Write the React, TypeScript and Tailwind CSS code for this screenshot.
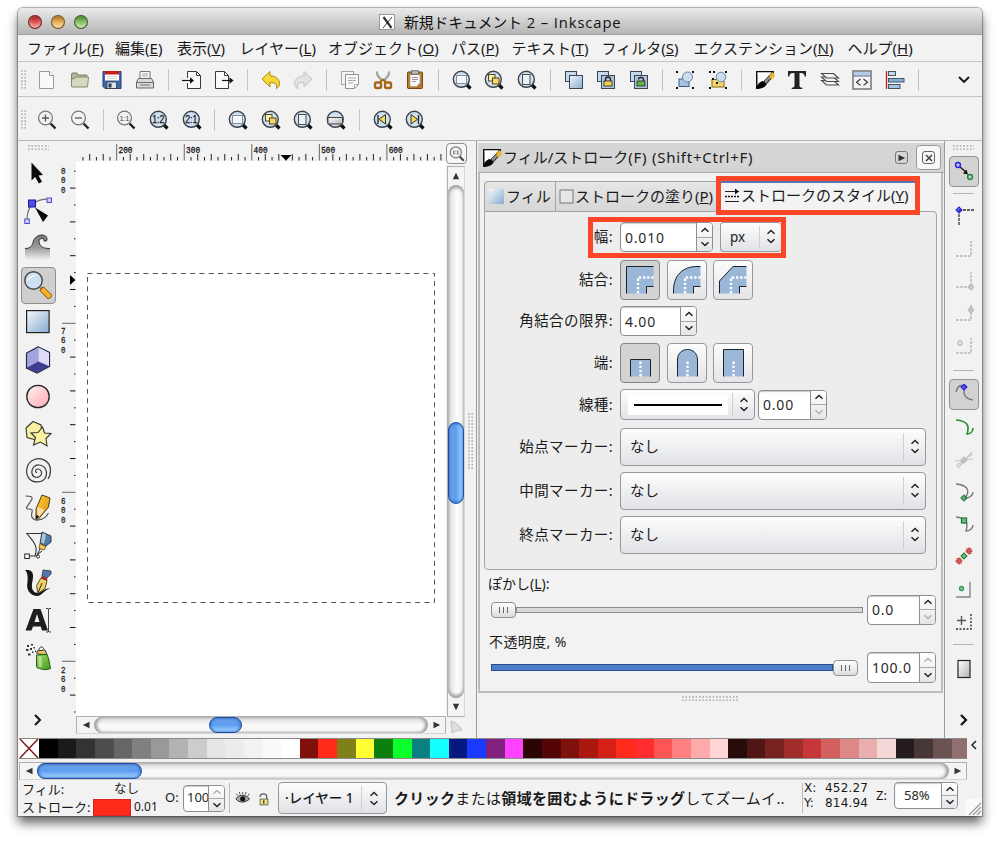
import React from "react";

type Kids = { children?: React.ReactNode };

function Ico({ s = 20, children }: Kids & { s?: number }) {
  return (
    <svg width={s} height={s} viewBox={`0 0 ${s} ${s}`} fill="none" className="shrink-0">
      {children}
    </svg>
  );
}

function Defs() {
  return (
    <svg width="0" height="0" className="absolute">
      <defs>
        <linearGradient id="blue" x1="0" y1="0" x2="1" y2="1">
          <stop offset="0" stopColor="#f4f8fc" />
          <stop offset="1" stopColor="#88abd0" />
        </linearGradient>
        <linearGradient id="pink" x1="0" y1="0" x2="1" y2="1">
          <stop offset="0" stopColor="#fff2f3" />
          <stop offset="1" stopColor="#ffa8b0" />
        </linearGradient>
        <linearGradient id="gray" x1="0" y1="0" x2="1" y2="1">
          <stop offset="0" stopColor="#ffffff" />
          <stop offset="1" stopColor="#b4b4b4" />
        </linearGradient>
        <linearGradient id="steel" x1="0" y1="0" x2="0" y2="1">
          <stop offset="0" stopColor="#777777" />
          <stop offset="0.5" stopColor="#999999" />
          <stop offset="1" stopColor="#eeeeee" />
        </linearGradient>
        <linearGradient id="gold" x1="0" y1="0" x2="1" y2="1">
          <stop offset="0" stopColor="#ffd23a" />
          <stop offset="1" stopColor="#e08a10" />
        </linearGradient>
        <linearGradient id="green" x1="0" y1="0" x2="1" y2="1">
          <stop offset="0" stopColor="#a6dc6c" />
          <stop offset="1" stopColor="#3f9a1c" />
        </linearGradient>
      </defs>
    </svg>
  );
}

/* ---------- toolbar icons ---------- */

const Lens = ({ children }: Kids) => (
  <Ico>
    <path d="M14.5 14.5l4 4" stroke="#111" strokeWidth="3.2" />
    <circle cx="9.3" cy="9.3" r="8" fill="#cfe0f2" stroke="#3a4248" strokeWidth="1.4" />
    {children}
  </Ico>
);
const GrayLens = ({ children }: Kids) => (
  <Ico>
    <path d="M13.5 13.5l5 5" stroke="#222" strokeWidth="2.4" />
    <circle cx="8.5" cy="8" r="6.9" fill="#f1f3f1" stroke="#777b77" strokeWidth="1.3" />
    {children}
  </Ico>
);
const LensText = ({ t }: { t: string }) => (
  <text x="9.3" y="13" fontSize="10" fill="#161616" stroke="#161616" strokeWidth=".25" textAnchor="middle" textLength="12" lengthAdjust="spacingAndGlyphs" fontFamily="Liberation Sans, sans-serif">{t}</text>
);
const LensSel = () => <Lens><rect x="4.500" y="5.500" width="10" height="8" fill="#f4f8fc" stroke="#333" strokeDasharray="1 1" /></Lens>;
const LensDraw = () => (
  <Lens>
    <rect x="4.500" y="4.500" width="6.500" height="6.500" fill="#f8edb2" stroke="#55471a" />
    <rect x="8.500" y="8" width="6.500" height="6" fill="#f5d968" stroke="#55471a" />
  </Lens>
);
const LensPage = () => <Lens><rect x="5.500" y="4.500" width="7.500" height="10" fill="#eceeef" stroke="#4c4c4c" /></Lens>;
const Doc = () => (
  <Ico>
    <path d="M2.500 1.500h10l4 4v13h-14z" fill="#fafafa" stroke="#9a9d97" />
    <path d="M12.500 1.500v4h4" fill="#fff" stroke="#9a9d97" />
  </Ico>
);
const Folder = () => (
  <Ico>
    <path d="M1.500 4.500l.5-1.500h5l1 2h9v4H1.500z" fill="#b4b89a" stroke="#7d826a" />
    <path d="M1.500 16.500V9l3-.500 1-1.500h13l-1 10H2z" fill="#d4d9bd" stroke="#858a70" />
  </Ico>
);
const Save = () => (
  <Ico>
    <path d="M1 1.500h18v17H3l-2-2z" fill="#3a69ad" stroke="#1f3f75" />
    <rect x="3" y="1" width="14" height="9.500" fill="#fff" />
    <rect x="3" y="1" width="14" height="3.500" fill="#cc1b16" />
    <path d="M5 6.500h10M5 8.500h10" stroke="#b9c0c8" strokeWidth=".7" />
    <rect x="5" y="12" width="9.500" height="6.500" fill="#dfe3e8" stroke="#333" strokeWidth=".8" />
    <rect x="6.500" y="13.500" width="3" height="4" fill="#26374e" />
  </Ico>
);
const Printer = () => (
  <Ico>
    <path d="M5 9.500V1.500h10v8" fill="#f7f7f7" stroke="#777" />
    <path d="M7 4h6M7 6h6" stroke="#999" strokeWidth=".8" />
    <path d="M1.500 12l2-3.500h13l2 3.500v6h-17z" fill="#d8dad6" stroke="#666" />
    <path d="M2 12.500h16M5 15h10" stroke="#6d706b" />
  </Ico>
);
const Import = () => (
  <Ico>
    <path d="M5.500 8V1.500h9l4 4v13h-13V13" fill="#fafafa" stroke="#3a3a3a" />
    <path d="M14.500 1.500v4h4" stroke="#3a3a3a" />
    <path d="M0 10.500h9" stroke="#111" strokeWidth="1.200" />
    <path d="M8 7.300l4 3.200-4 3.200z" fill="#111" />
  </Ico>
);
const Export = () => (
  <Ico>
    <path d="M1.500 1.500h9l4 4v13h-13z" fill="#fafafa" stroke="#3a3a3a" />
    <path d="M10.500 1.500v4h4" stroke="#3a3a3a" />
    <path d="M8 10.500h8" stroke="#111" strokeWidth="1.200" />
    <path d="M15.500 7.300l4 3.200-4 3.200z" fill="#111" />
  </Ico>
);
const Undo = () => (
  <Ico><path d="M1 9l8-7.500v4.300c6.500.2 9.500 4 9.500 7.500 0 2.600-1 4-3.200 5.400 1.400-4-.6-6.200-6.300-6.200V17z" fill="#f6d83a" stroke="#b18a0c" /></Ico>
);
const Redo = () => (
  <Ico><path d="M19 9l-8-7.500v4.300c-6.500.2-9.500 4-9.500 7.500 0 2.600 1 4 3.200 5.400-1.400-4 .6-6.200 6.300-6.200V17z" fill="#e2e2e2" stroke="#c3c3c3" /></Ico>
);
const Copy = () => (
  <Ico>
    <rect x="1.500" y="1.500" width="12" height="13" fill="#f3f3f3" stroke="#a5a5a5" />
    <path d="M5.500 4.500h13v10l-4 4h-9z" fill="#fafafa" stroke="#909090" />
    <path d="M8 8h8M8 10.500h8M8 13h5M14.500 18.500v-4h4" stroke="#aaa" />
  </Ico>
);
const Cut = () => (
  <Ico>
    <path d="M4 1.500c-1 3 2 6 5.500 9.500M16 1.500c1 3-2 6-5.500 9.500" stroke="#a2a6a2" strokeWidth="2.200" />
    <rect x="2" y="12.500" width="6" height="5.500" rx="1.500" stroke="#a5661a" strokeWidth="2.400" />
    <rect x="12" y="12.500" width="6" height="5.500" rx="1.500" stroke="#a5661a" strokeWidth="2.400" />
    <path d="M7 12l3-2.500 3 2.500" stroke="#a5661a" strokeWidth="2" />
  </Ico>
);
const Paste = () => (
  <Ico>
    <rect x="2.500" y="2" width="15" height="16.500" rx="1" fill="#b87a2a" stroke="#734810" />
    <path d="M5 4.500h10v8.500l-3.500 3.500H5z" fill="#f7f7f7" stroke="#999" strokeWidth=".6" />
    <rect x="6.500" y=".8" width="7" height="3.400" fill="#bbb" stroke="#555" strokeWidth=".8" />
    <path d="M7 7.500h6M7 9.500h6M7 11.500h4" stroke="#999" />
  </Ico>
);
const Stack = ({ mark }: { mark?: "lock" | "unlock" }) => (
  <Ico>
    <rect x="1.500" y="1.500" width="11" height="10" fill="#c8d8ea" stroke="#36475c" />
    <rect x="5.500" y="5.500" width="13" height="13" fill={mark ? "#b3c5da" : "url(#blue)"} stroke="#36475c" />
    {mark && <path d={mark === "lock" ? "M9.500 11V9.500a2.500 2.500 0 015 0V11" : "M9.500 9.500a2.500 2 0 015 0V12"} stroke="#222" strokeWidth="1.300" />}
    {mark && <rect x="8" y="11" width="8" height="5" fill={mark === "lock" ? "#f6d24b" : "#62b544"} stroke="#222" strokeWidth=".8" />}
  </Ico>
);
const Handles = () => (
  <path d="M1 1h2v2H1zM17 1h2v2h-2zM1 17h2v2H1zM17 17h2v2h-2z" fill="#111" />
);
const Group = () => (
  <Ico>
    <rect x="4" y="9" width="10" height="7.500" fill="#a8c4e2" stroke="#3d5c80" />
    <circle cx="12.500" cy="7" r="5" fill="#ccdced" stroke="#6a86a6" />
    <Handles />
  </Ico>
);
const Ungroup = () => (
  <Ico>
    <rect x="4" y="9.500" width="12" height="7.500" fill="#f6d968" stroke="#856613" />
    <circle cx="13" cy="7" r="4.800" fill="#ccdced" stroke="#6a86a6" />
    <Handles />
    <path d="M5 1h2v2H5zM4 8h2v2H4zM8 12h2v2H8z" fill="#111" />
  </Ico>
);
const FillStroke = () => (
  <Ico>
    <path d="M1 1h18v5L9 17l-8 2z" fill="#111" />
    <path d="M2.500 2.500h14L5 16z" fill="url(#gray)" />
    <path d="M2.500 2.500h14L8 12l-5.500 4z" fill="#fdfdfd" />
    <path d="M1.500 19c0-4 3-7.500 6.500-8l3.500 3.500C9 18 5 19 1.500 19z" fill="#050505" />
    <path d="M9 11l8-8 2 2-8 9z" fill="#8f8f8f" stroke="#222" strokeWidth=".7" />
    <path d="M14.500 5.500l3-3.500 2 2v3L16 10z" fill="#e9b52a" />
  </Ico>
);
const BigT = () => <Ico><path d="M1 1h18v5.500h-1.200C17.200 3.800 16.300 3 14 3h-1.500v12.500c0 1.700.8 2 2.800 2.200V19H4.700v-1.300c2-.2 2.800-.5 2.800-2.200V3H6C3.700 3 2.800 3.800 2.200 6.500H1z" fill="#222" /></Ico>;
const Layers = () => (
  <Ico>
    {[13, 9.500, 6].map((y) => (
      <path key={y} d={`M1.500 ${y - 2.500}h12l5 4.500h-12z`} fill="#f2f2f2" stroke="#4a4a4a" strokeWidth="1.100" />
    ))}
  </Ico>
);
const Xml = () => (
  <Ico>
    <rect x="1" y="1" width="18" height="18" fill="#f4f4f4" stroke="#555" strokeWidth="1.200" />
    <rect x="2" y="2" width="16" height="3.500" fill="#b4cce6" />
    <path d="M1.500 6h17" stroke="#4b6a8e" />
    <path d="M8.500 9l-4 3.200 4 3.200M11.500 9l4 3.200-4 3.200" stroke="#333" strokeWidth="1.200" />
  </Ico>
);
const Align = () => (
  <Ico>
    <path d="M1.500 1v18" stroke="#c41414" strokeWidth="1.300" />
    <rect x="3.500" y="1.500" width="7" height="4" fill="#c7d9ec" stroke="#456" />
    <rect x="3.500" y="8.500" width="15.500" height="3.500" fill="#86aedb" stroke="#456" />
    <rect x="3.500" y="14.500" width="11.500" height="4" fill="#a6c3e2" stroke="#456" />
  </Ico>
);

type Entry = React.ReactNode;
const bar1: Entry[] = [
  <Doc />, <Folder />, <Save />, <Printer />, null, <Import />, <Export />, null, <Undo />, <Redo />, null,
  <Copy />, <Cut />, <Paste />, null, <LensSel />, <LensDraw />, <LensPage />, null,
  <Stack />, <Stack mark="lock" />, <Stack mark="unlock" />, null, <Group />, <Ungroup />, null,
  <FillStroke />, <BigT />, <Layers />, <Xml />, <Align />, null,
];
const bar2: Entry[] = [
  <GrayLens><path d="M8.500 4.500v7M5 8h7" stroke="#555" strokeWidth="1.300" /></GrayLens>,
  <GrayLens><path d="M5 8h7" stroke="#555" strokeWidth="1.300" /></GrayLens>,
  null,
  <GrayLens><text x="8.500" y="10.800" fontSize="8" textAnchor="middle" textLength="9.500" lengthAdjust="spacingAndGlyphs" fill="#333" fontFamily="Liberation Sans, sans-serif">1:1</text></GrayLens>,
  <Lens><LensText t="1:2" /></Lens>,
  <Lens><LensText t="2:1" /></Lens>,
  null,
  <LensSel />, <LensDraw />, <LensPage />,
  <Lens><rect x="2" y="7.500" width="14.500" height="6.500" fill="url(#gray)" stroke="#444" /></Lens>,
  null,
  <Lens><path d="M5 5v9" stroke="#222" strokeWidth="1.300" /><path d="M12.500 4.500v9.500L6 9.300z" fill="#f5dc4a" stroke="#333" /></Lens>,
  <Lens><path d="M13.500 5v9" stroke="#222" strokeWidth="1.300" /><path d="M6 4.500v9.500l6.500-4.700z" fill="#f5dc4a" stroke="#333" /></Lens>,
];

function Dots({ cls }: { cls: string }) {
  return <div className={`shrink-0 bg-[radial-gradient(circle_at_1px_1px,#b5b5b5_0.8px,transparent_1px)] bg-[length:3.400px_3.400px] ${cls}`} />;
}

function Toolbar({ items }: { items: Entry[] }) {
  return (
    <div className="flex h-full items-center pt-[2px]">
      <Dots cls="ml-[3px] mr-[4px] h-[20px] w-[6px]" />
      {items.map((it, i) =>
        it ? (
          <div key={i} className="flex w-[32.6px] shrink-0 justify-center">{it}</div>
        ) : (
          <div key={i} className="flex w-[14px] shrink-0 justify-center"><div className="h-[22px] w-px bg-[#c4c4c4]" /></div>
        )
      )}
    </div>
  );
}

/* ---------- toolbox ---------- */

const tools: React.ReactNode[] = [
  <Ico s={28}><path d="M7.500 2.500v18l3.700-3.500 3.600 6.500 3.200-1.800-3.500-6.200 4.500-.5z" fill="#0a0a0a" /></Ico>,
  <Ico s={28}>
    <path d="M3 23C3 12 8 2 25 2" stroke="#666" strokeWidth="1.100" />
    <rect x="4.500" y="3" width="7" height="7" fill="#5050dc" stroke="#1616a0" />
    <rect x="23" y="1" width="4.500" height="4.500" fill="#d0d0ff" stroke="#4a4ad0" />
    <rect x=".8" y="22" width="4.500" height="4.500" fill="#d0d0ff" stroke="#4a4ad0" />
    <path d="M11 10.500l13 8-5 6.500z" fill="#0a0a0a" />
  </Ico>,
  <Ico s={28}>
    <path d="M1 14.500c6 0 7-3 8-6C10 3.500 14 1 18 1c4 0 6 3 4.500 6H20c0-1.500-.5-2.500-2-2.500-3 0-3.500 3-2.500 5.500 2 3.500 5 4.500 10.500 4.500v11H1z" fill="url(#steel)" />
    <path d="M1 14.500c6 0 7-3 8-6C10 3.500 14 1 18 1c4 0 6 3 4.500 6H20c0-1.500-.5-2.500-2-2.500-3 0-3.500 3-2.500 5.500 2 3.500 5 4.500 10.500 4.500" stroke="#333" />
  </Ico>,
  <Ico s={28}>
    <path d="M16.500 16.500l3 3" stroke="#777" strokeWidth="3" />
    <path d="M19.500 19.500l5 5" stroke="#8a5a06" strokeWidth="6" strokeLinecap="square" />
    <path d="M19.500 19.500l5 5" stroke="#f7b229" strokeWidth="4.400" strokeLinecap="square" />
    <circle cx="9.500" cy="9.500" r="8.700" fill="#cfe0f2" stroke="#444" strokeWidth="1.400" />
    <path d="M3.500 10.500c0-5 5-7 10-6-4 0-7 2-10 6z" fill="#f6faff" />
  </Ico>,
  <Ico s={28}><rect x="2.600" y="2.600" width="22.500" height="22" fill="url(#blue)" stroke="#222" strokeWidth="1.200" /></Ico>,
  <Ico s={28}>
    <path d="M14 .8l11.500 5.500v14L13 27 2.500 22V7z" fill="#8c8ccc" stroke="#26264a" strokeWidth="1.200" />
    <path d="M14.500 1.500L25 7v13l-10.500-4.500z" fill="#dcdcf7" />
    <path d="M14 15.500l11 4.700-12 6.200-10-4.700z" fill="#3f3f92" />
    <path d="M14 2L3.300 7.500v13.700l10.700-5.700z" fill="#a4a4dc" />
  </Ico>,
  <Ico s={28}><circle cx="14" cy="13.500" r="11.200" fill="url(#pink)" stroke="#222" strokeWidth="1.300" /></Ico>,
  <Ico s={28}>
    <path d="M9 1.500l8 3.500 1 8-6 7-9-2.500-1-9.500z" fill="#f8f0a0" stroke="#333" strokeWidth="1.100" />
    <path d="M18.500 7l2 6 6.500.5-5 5 1 7.500-6.500-4-7 3 2-7.500-4.500-4.500 7-.5z" fill="#fbf3a2" stroke="#333" strokeWidth="1.100" />
  </Ico>,
  <Ico s={28}><path d="M13 15.500c-2 0-2-3 .5-3.500 3-.3 5 3 3.500 6-2 3.500-8 3-9-1.500-1-5 3-9 7.500-8.500 6 .5 8.500 7 6 12.500-3 5.500-12 6-16.500 1C.5 16 2.500 5 10.500 2.500 18-.5 26.500 5 26.500 13c0 4-1 7-2.500 9" stroke="#3a3a3a" strokeWidth="1.200" /></Ico>,
  <Ico s={28}>
    <path d="M1.500 2c4 0 8 0 6 4s-8 9-3 9c6 0 3 3 3 6 0 7 12 7 17-2" stroke="#555" strokeWidth="1.200" />
    <path d="M18 1l8 3-1.500 9-10 12h-2.500v-10z" fill="url(#gold)" stroke="#4d3812" strokeWidth="1" />
    <path d="M13.500 13l7 3-7 8.500z" fill="#f7dfb0" /><path d="M12.200 20.500l3 2-3.300 3z" fill="#111" />
  </Ico>,
  <Ico s={28}>
    <path d="M2 2.500h16M3 2.500c5 7 12 12 8 22M5 25h9" stroke="#333" strokeWidth="1.100" />
    <rect x=".8" y="23" width="4.500" height="4.500" fill="#fff" stroke="#222" />
    <circle cx="14" cy="25.500" r="1.500" fill="#fff" stroke="#222" />
    <path d="M18 1l9 4v6l-5 4-6-2.500z" fill="#4f7da3" stroke="#1d3447" strokeWidth=".9" />
    <path d="M18.500 2l3.500 1.500-2 9-3-1z" fill="#a9c8dd" />
    <path d="M16 12.500l6 3-2 3.500-5-1.500z" fill="#f3c55a" stroke="#5b430d" strokeWidth=".8" /><path d="M16 18l-3 6 5-4" stroke="#222" />
  </Ico>,
  <Ico s={28}>
    <path d="M1 1c11-1 8 8 7 14-.6 5 1 8 5 9 5 0 8-6 13-4-4-1-8 7-13 7C5 26 2 20 3.500 13 4 8 3.500 3 1 1z" fill="#161616" />
    <path d="M19 1l8 1v3l-4 4-5-2z" fill="#5578a8" stroke="#243852" strokeWidth=".8" /><path d="M17.500 7l6 2.500-.5 2-6-2z" fill="#bb2020" />
    <path d="M17 9l6 2.500-2 8-7 5-1.500-8z" fill="#f4d169" stroke="#4b3a10" strokeWidth=".9" /><path d="M18 14l-4 10" stroke="#222" />
  </Ico>,
  <Ico s={28}>
    <path d="M1.500 24.500L9.500 3h7L24 24.500h-6l-1.300-4H9L7.500 24.500zM10.500 16h5L13 8z" fill="#1f1f1f" />
    <path d="M24.500 3v22M22 2.500h2l.5 1 .5-1h2M22 26h2l.5-1 .5 1h2" stroke="#333" strokeWidth=".9" />
  </Ico>,
  <Ico s={28}>
    <path d="M3 2h2v2H3zM7 1h2v1.500H7zM2 6h2.500v2H2zM6 5h2v2H6zM9.500 4h1.500v1.500H9.500zM4 10.500h2.500v2H4zM8 8.500h1.500v1.500H8zM11 7.500h1V9h-1z" fill="#333" />
    <path d="M13 8l8-1 2 4.500-10-.5z" fill="#e9c969" stroke="#333" /><path d="M15 7c0-4 4-4 5-.500" stroke="#333" />
    <path d="M12.500 12l10.500-.5c2 4 2.500 9 3.500 14-3 1.500-7 1.500-11 0-2-.5-3.500-1-3-2z" fill="url(#green)" stroke="#245c10" /><path d="M14.500 13.500h3l.5 11-3-1z" fill="#d7f0bb" opacity=".6" />
  </Ico>,
];

/* ---------- rulers and canvas ---------- */

function HRuler() {
  const ticks: React.ReactNode[] = [];
  for (let i = -5; i <= 48; i++) {
    const x = 40.700 + i * 6.755;
    const major = i % 10 === 0 && i >= 0;
    const y = major ? 3 : i % 2 === 0 ? 13 : 16;
    ticks.push(<path key={i} d={`M${x} ${y}V19.500`} stroke={major ? "#666" : "#222"} />);
  }
  return (
    <svg width="370" height="20" className="shrink-0">
      {ticks}
      {[200, 300, 400, 500, 600].map((n, i) => (
        <text key={n} x={42.500 + i * 67.550} y="11.500" fontSize="9.500" textLength="14" lengthAdjust="spacingAndGlyphs" fill="#111" stroke="#111" strokeWidth=".3" fontFamily="Liberation Mono, monospace">{n}</text>
      ))}
      <path d="M204.500 14h11l-5.500 5.500z" fill="#000" />
    </svg>
  );
}

function VRuler() {
  const ticks: React.ReactNode[] = [];
  for (let i = -9; i <= 23; i++) {
    const y = 162.300 + i * 16.900;
    const major = i % 10 === 0 && i >= 0;
    const x = major ? 1 : i % 2 === 0 ? 9 : 13;
    ticks.push(<path key={i} d={`M${x} ${y}H14.500`} stroke={major ? "#666" : "#111"} />);
  }
  const labels: [string, number][] = [["000", 13], ["760", 173], ["600", 343], ["260", 512]];
  return (
    <svg width="15" height="555" className="shrink-0">
      {ticks}
      {labels.map(([t, y]) =>
        t.split("").map((c, k) => (
          <text key={`${t}-${k}`} x="0" y={y + k * 9.400} fontSize="9.500" fill="#222" stroke="#222" strokeWidth=".3" textLength="4.500" lengthAdjust="spacingAndGlyphs" fontFamily="Liberation Mono, monospace">{c}</text>
        ))
      )}
      <path d="M9 114v10l5.500-5z" fill="#000" />
    </svg>
  );
}

const Tri = ({ d }: { d: string }) => <svg width="8" height="8" viewBox="0 0 8 8"><path d={d} fill="#333" /></svg>;
const L = "M7.500 0.800v6.400L0.800 4z", R = "M0.500 0.800v6.400L7.200 4z", U = "M0.800 7.300h6.400L4 0.800z", D = "M0.800 0.700h6.400L4 7.200z";

function HScroll({ offset, thumb }: { offset: string; thumb: string }) {
  return (
    <div className="flex h-[18px] w-full border border-b-[#d5d5d5] border-[#b0b0b0] bg-[#f4f4f4]">
      <div className="flex w-[17px] shrink-0 items-center justify-center"><Tri d={L} /></div>
      <div className="flex grow rounded-full bg-gradient-to-b from-[#d8d8d8] via-[#fbfbfb] to-[#f3f3f3] shadow-[inset_3px_0_3px_#a2a2a2,inset_-3px_0_3px_#a2a2a2]">
        <div className={`h-[16px] rounded-full border border-[#1d4fa8] bg-gradient-to-b from-[#6da2e6] via-[#5d9df0] to-[#a8dcff] shadow-[inset_0_0_3px_#1747a8] ${offset} ${thumb}`} />
      </div>
      <div className="flex w-[17px] shrink-0 items-center justify-center"><Tri d={R} /></div>
    </div>
  );
}

function VScroll() {
  return (
    <div className="flex h-[551px] w-[18px] flex-col border border-r-[#d5d5d5] border-[#b0b0b0] bg-[#f4f4f4]">
      <div className="flex h-[18px] shrink-0 items-center justify-center"><Tri d={U} /></div>
      <div className="flex grow flex-col rounded-full bg-gradient-to-r from-[#d8d8d8] via-[#fbfbfb] to-[#f3f3f3] shadow-[inset_0_3px_3px_#a2a2a2,inset_0_-3px_3px_#a2a2a2]">
        <div className="mt-[237px] h-[82px] w-[16px] rounded-full border border-[#1d4fa8] bg-gradient-to-r from-[#6da2e6] via-[#5d9df0] to-[#a8dcff] shadow-[inset_0_0_3px_#1747a8]" />
      </div>
      <div className="flex h-[18px] shrink-0 items-center justify-center"><Tri d={D} /></div>
    </div>
  );
}

/* ---------- form widgets ---------- */

const Chev = ({ up, dim }: { up?: boolean; dim?: boolean }) => (
  <svg width="10" height="6" viewBox="0 0 10 6" fill="none">
    <path d={up ? "M1.500 4.800L5 1.500l3.500 3.300" : "M1.500 1.200L5 4.500l3.500-3.300"} stroke={dim ? "#b0b0b0" : "#222"} strokeWidth="1.500" />
  </svg>
);

function Spin({ v, cls, upDim, downDim, pad = "pl-[4px] text-[14px] tracking-[0.8px]" }: { v: string; cls: string; upDim?: boolean; downDim?: boolean; pad?: string }) {
  return (
    <div className={`flex shrink-0 overflow-hidden rounded-[4px] border border-[#8e8f94] bg-white shadow-[inset_0_1px_1px_#c9c9c9] ${cls}`}>
      <div className={`flex min-w-0 grow items-center overflow-hidden whitespace-nowrap text-[#2a2a2a] ${pad}`}>{v}</div>
      <div className="flex w-[16px] shrink-0 flex-col border-l border-[#8e8f94] bg-gradient-to-b from-white to-[#e4e5e8]">
        <div className="flex flex-1 items-center justify-center border-b border-[#a8a8ac]"><Chev up dim={upDim} /></div>
        <div className="flex flex-1 items-center justify-center"><Chev dim={downDim} /></div>
      </div>
    </div>
  );
}

function Combo({ children, cls, arrow = "w-[22px]" }: Kids & { cls: string; arrow?: string }) {
  return (
    <div className={`flex shrink-0 items-center rounded-[4px] border-[1.500px] border-[#96989d] bg-gradient-to-b from-[#fdfdfd] to-[#e1e2e6] ${cls}`}>
      <div className="flex min-w-0 grow items-center">{children}</div>
      <div className={`flex h-[80%] flex-col items-center justify-center gap-[3px] border-l border-[#cfcfd2] ${arrow}`}><Chev up /><Chev /></div>
    </div>
  );
}

function Toggle({ on, children }: Kids & { on?: boolean }) {
  return (
    <div className={on ? "flex h-[40px] w-[40px] items-center justify-center rounded-[4px] border border-[#85868a] bg-[#d3d3d3]" : "flex h-[40px] w-[40px] items-center justify-center rounded-[4px] border border-[#96989d] bg-gradient-to-b from-[#fdfdfd] to-[#e4e4e7]"}>
      {children}
    </div>
  );
}

const Join = ({ d }: { d: string }) => (
  <Ico s={28}>
    <path d={`${d}H27.500V20.500H20.500V27.500H0.500z`} fill="#9ab7d8" />
    <path d={d + "H27.500M27.500 20.500H20.500V27.500"} stroke="#1b232d" />
    <path d="M12 27.500V11.500H27.500" stroke="#fff" strokeWidth="2.400" strokeDasharray="2.400 1.800" />
  </Ico>
);
const Cap = ({ d, y }: { d: string; y: number }) => (
  <Ico s={28}>
    <path d={d} fill="#9ab7d8" stroke="#1b232d" />
    <path d={`M14.500 27.500V${y}`} stroke="#fff" strokeWidth="2.400" strokeDasharray="2.400 1.800" />
  </Ico>
);

function Row({ label, cls, children }: Kids & { label: string; cls: string }) {
  return (
    <div className={`flex items-center ${cls}`}>
      <div className="mr-[7px] w-[128px] shrink-0 whitespace-nowrap text-right text-[14.500px] tracking-[0.400px]">{label}</div>
      {children}
    </div>
  );
}

function Dock() {
  return (
    <div className="flex h-[597px] w-[469px] shrink-0 flex-col border-l border-[#9a9a9a] border-r bg-[#f2f2f2] pl-px pt-[2px]">
      <div className="flex h-[30px] items-center border-b border-[#a8a8a8] bg-[#d5d5d5] pl-[4px]">
        <FillStroke />
        <div className="ml-[1px] grow whitespace-nowrap text-[15px]">フィル/ストローク<span className="tracking-[0.750px]">(F) (Shift+Ctrl+F)</span></div>
        <div className="mr-[8px] flex h-[13px] w-[13px] items-center justify-center rounded-[3px] border border-[#777]"><Tri d={R} /></div>
        <div className="mr-[3px] flex h-[25px] w-[25px] items-center justify-center rounded-[4px] border border-[#999] bg-[#f8f8f8]">
          <div className="flex h-[13px] w-[13px] items-center justify-center rounded-[3px] border border-[#666]">
            <svg width="8" height="8" viewBox="0 0 8 8"><path d="M1 1l6 6M7 1L1 7" stroke="#444" strokeWidth="1.600" /></svg>
          </div>
        </div>
      </div>
      <div className="flex h-[520px] w-[465px] flex-col border-2 border-t-0 border-[#bcbcbc] pl-[4px] pt-[8px]">
        <div className="relative flex h-[30px] items-end text-[15px] whitespace-nowrap">
          <div className="flex h-[30px] w-[72px] items-center rounded-tl-[4px] border border-b-0 border-[#a3a3a3] bg-gradient-to-b from-[#e6e6e6] to-[#d6d6d6] pl-[4px]">
            <Ico s={15}><rect width="15" height="15" fill="url(#blue)" /></Ico>
            <span className="ml-[2px]">フィル</span>
          </div>
          <div className="flex h-[30px] w-[161px] items-center border border-b-0 border-l-0 border-[#a3a3a3] bg-gradient-to-b from-[#e6e6e6] to-[#d6d6d6] pl-[3px]">
            <Ico s={15}><rect x="1" y="1" width="13" height="13" fill="#e6e6e6" stroke="#777" /></Ico>
            <span className="ml-[1px]">ストロークの塗り(<u>P</u>)</span>
          </div>
          <div className="absolute left-[232px] top-[-5px] z-10 flex h-[39px] w-[204px] items-center border-[5px] border-[#fa4626] bg-[#f3f3f3] pl-[4px] shadow-[inset_0_2px_0_#5373b5]">
            <Ico s={15}><path d="M0 3.500h14M0 13.500h14" stroke="#222" /><path d="M0 8.500h14" stroke="#111" strokeWidth="1.300" strokeDasharray="2 1" /><path d="M10 .5l4 3-4 3z" fill="#111" /></Ico>
            <span className="ml-[1px]">ストロークのスタイル(<u>Y</u>)</span>
          </div>
        </div>
        <div className="relative flex h-[359px] w-[453px] flex-col rounded-b-[4px] rounded-tr-[4px] border border-[#a3a3a3] bg-[#ededed]">
          <div className="absolute left-[103px] top-[5px] h-[41px] w-[198px] border-[5px] border-[#fa4626]" />
          <Row label="幅:" cls="mt-[10px] h-[30px]">
            <Spin v="0.010" cls="h-[30px] w-[93px]" />
            <Combo cls="ml-[7px] h-[30px] w-[61px] border-r-0" arrow="w-[22px]"><span className="pl-[9px] text-[13.500px]">px</span></Combo>
          </Row>
          <Row label="結合:" cls="mt-[8px] h-[40px]">
            <div className="flex gap-[6.500px]">
              <Toggle on><Join d="M0.500 27.500V0.500" /></Toggle>
              <Toggle><Join d="M0.500 27.500V25C0.500 9 10 0.500 24 0.500" /></Toggle>
              <Toggle><Join d="M0.500 27.500V15L14 0.500" /></Toggle>
            </div>
          </Row>
          <Row label="角結合の限界:" cls="mt-[6px] h-[30px]"><Spin v="4.00" cls="h-[30px] w-[77px]" /></Row>
          <Row label="端:" cls="mt-[7px] h-[40px]">
            <div className="flex gap-[6.500px]">
              <Toggle on><Cap d="M4.500 27.500V10.500h20V27.500" y={12} /></Toggle>
              <Toggle><Cap d="M4.500 27.500V11C4.500-3 24.500-3 24.500 11V27.500" y={12} /></Toggle>
              <Toggle><Cap d="M4.500 27.500V.5h20v27" y={12} /></Toggle>
            </div>
          </Row>
          <Row label="線種:" cls="mt-[6px] h-[31px]">
            <Combo cls="h-[31px] w-[135px]"><div className="ml-[7px] flex h-[20px] w-[100px] items-center justify-center bg-white"><div className="h-[2px] w-[88px] bg-black" /></div></Combo>
            <Spin v="0.00" cls="ml-[3px] h-[30px] w-[69px]" downDim />
          </Row>
          <Row label="始点マーカー:" cls="mt-[8px] h-[38px]"><Combo cls="h-[38px] w-[306px]"><span className="pl-[9px] text-[14.500px]">なし</span></Combo></Row>
          <Row label="中間マーカー:" cls="mt-[6px] h-[38px]"><Combo cls="h-[38px] w-[306px]"><span className="pl-[9px] text-[14.500px]">なし</span></Combo></Row>
          <Row label="終点マーカー:" cls="mt-[6px] h-[38px]"><Combo cls="h-[38px] w-[306px]"><span className="pl-[9px] text-[14.500px]">なし</span></Combo></Row>
        </div>
        <div className="mt-[4px] h-[20px] pl-[4px] text-[14px] leading-[20px]">ぽかし(<u>L</u>):</div>
        <div className="flex h-[31px] items-center">
          <div className="ml-[7px] flex w-[372px] items-center">
            <Knob />
            <div className="h-[6px] grow border border-[#8c8c8c] bg-[#d9d9d9]" />
          </div>
          <Spin v="0.0" cls="ml-[4px] h-[30px] w-[69px]" downDim />
        </div>
        <div className="mt-[7px] h-[20px] pl-[5px] text-[14px] leading-[20px] tracking-[0.400px]">不透明度, %</div>
        <div className="flex h-[31px] items-center">
          <div className="ml-[7px] flex w-[367px] items-center">
            <div className="h-[7px] grow border border-[#2c4d8c] bg-[#4d7ccc]" />
            <Knob />
          </div>
          <Spin v="100.0" cls="ml-[9px] h-[31px] w-[69px]" upDim />
        </div>
      </div>
      <div className="flex justify-center pt-[3px] pr-[3px]"><Dots cls="h-[6px] w-[56px]" /></div>
    </div>
  );
}

function Knob() {
  return (
    <div className="flex h-[16px] w-[25px] shrink-0 items-center justify-center gap-[3px] rounded-[4px] border border-[#8e8f94] bg-gradient-to-b from-white to-[#dcdcdc]">
      <div className="h-[6px] w-px bg-[#666]" /><div className="h-[6px] w-px bg-[#666]" /><div className="h-[6px] w-px bg-[#666]" />
    </div>
  );
}

/* ---------- snap bar ---------- */

const Node = ({ x, y, c }: { x: number; y: number; c: string }) => (
  <rect x={x - 2} y={y - 2} width="4" height="4" transform={`rotate(45 ${x} ${y})`} fill={c} fillOpacity=".5" stroke={c} strokeWidth="1.300" />
);
const B = "#2323e0", G = "#23823a", X = "#b9b9b9";
const snaps: { h: string; on?: boolean; n: React.ReactNode }[] = [
  { h: "h-[30px]", on: true, n: <><path d="M6 6l6 5" stroke="#111" strokeWidth="1.300" /><path d="M14 13.500l-5-1 3.500-4z" fill="#111" /><circle cx="4" cy="4" r="2.400" fill="#c4c4ff" stroke={B} strokeWidth="1.500" /><circle cx="16" cy="16" r="2.400" fill="#b4d8bc" stroke={G} strokeWidth="1.500" /></> },
  { h: "h-[14px]", n: null },
  { h: "h-[32px]", n: <><path d="M5 4h15M5 4v15" stroke="#333" strokeWidth="1.300" strokeDasharray="3 1" /><Node x={5} y={4} c={B} /></> },
  { h: "h-[33px]", n: <path d="M2 17h15V2" stroke={X} strokeWidth="1.500" strokeDasharray="3 1" /> },
  { h: "h-[32px]", n: <><path d="M2 16h15V1" stroke={X} strokeWidth="1.500" strokeDasharray="3 1" /><Node x={17} y={16} c={X} /></> },
  { h: "h-[32px]", n: <><path d="M2 17h15V2" stroke={X} strokeWidth="1.500" strokeDasharray="3 1" /><Node x={17} y={7} c={X} /></> },
  { h: "h-[33px]", n: <><path d="M2 17h15V2" stroke={X} strokeWidth="1.500" strokeDasharray="3 1" /><circle cx="6" cy="7" r="2" stroke={X} strokeWidth="1.300" /></> },
  { h: "h-[16px]", n: null },
  { h: "h-[32px]", on: true, n: <><path d="M2 8C4 1 8 0 11 3c-3 8 1 12 8 13" stroke="#777" strokeWidth="1.400" /><Node x={10} y={3} c={B} /></> },
  { h: "h-[33px]", n: <path d="M2 3c11 1 14 5 11 14 3 0 6-2 6-6" stroke="#2c8f2c" strokeWidth="1.600" /> },
  { h: "h-[33px]", n: <><path d="M2 16L18 4M4 18L18 2M1 11l18-2" stroke="#c6c6c6" strokeWidth="1.200" /><Node x={10} y={10} c={X} /></> },
  { h: "h-[32px]", n: <><path d="M2 2c11 1 15 6 9 14 4 0 8-2 8-6" stroke="#777" strokeWidth="1.400" /><Node x={10} y={16} c={G} /></> },
  { h: "h-[32px]", n: <><path d="M2 3c9 1 13 5 10 14 3 0 7-2 7-6" stroke="#777" strokeWidth="1.400" /><rect x="7.500" y="4" width="5" height="5" fill="#79b58a" stroke={G} strokeWidth="1.300" /></> },
  { h: "h-[32px]", n: <><Node x={5} y={15} c="#c94040" /><Node x={15} y={5} c="#c94040" /><Node x={10} y={10} c={G} /><path d="M2.500 12l5 6M12.500 2l5 6M2.500 17l5-5M12.500 7l5-5" stroke="#c94040" /></> },
  { h: "h-[33px]", n: <><path d="M2 18h14V3" stroke="#888" strokeWidth="1.400" /><circle cx="7.500" cy="9.500" r="2" fill="#9acaaa" stroke="#2f9a4a" strokeWidth="1.300" /></> },
  { h: "h-[32px]", n: <><path d="M2 18h15V3" stroke="#333" strokeWidth="1.400" strokeDasharray="2 1.500" /><path d="M7.500 5v9M3 9.500h9" stroke="#555" strokeWidth="1.400" /></> },
  { h: "h-[15px]", n: null },
  { h: "h-[34px]", n: <rect x="4" y="1.500" width="12" height="17" fill="url(#gray)" stroke="#222" strokeWidth="1.200" /> },
];

function SnapBar() {
  return (
    <div className="flex w-[37px] shrink-0 flex-col items-center pt-[4px]">
      <Dots cls="h-[6px] w-[21px]" />
      <div className="h-[5px]" />
      {snaps.map((s, i) => (
        <div key={i} className={`flex w-[30px] shrink-0 items-center justify-center ${s.h}`}>
          {s.n ? (
            s.on ? <div className="flex h-[31px] w-[30px] shrink-0 items-center justify-center rounded-[4px] border border-[#929292] bg-[#d2d2d2]"><Ico>{s.n}</Ico></div> : <Ico>{s.n}</Ico>
          ) : (
            <div className="h-px w-[21px] bg-[#b5b5b5]" />
          )}
        </div>
      ))}
      <svg width="10" height="14" viewBox="0 0 10 14" className="mt-[27px]" fill="none"><path d="M2 2l5 5-5 5" stroke="#111" strokeWidth="2.200" /></svg>
    </div>
  );
}

/* ---------- palette ---------- */

const palette = ("000000 1a1a1a 333333 4d4d4d 666666 808080 999999 b3b3b3 cccccc e6e6e6 ececec f2f2f2 f9f9f9 ffffff " +
  "80100c ff2a1a 808018 ffff33 0a800f 0bff2a 0a8080 14ffff 051a80 1a3aff 80207f ff42ff " +
  "2b0404 550505 80100c aa180f d42015 ff2a1a ff2d2d ff5555 ff8080 ffaaaa ffd5d5 " +
  "280b0b 501616 782121 a02c2c c83737 d35f5f de8787 e9afaf f4d7d7 241c1c 483737 6c5353 916f6f").split(" ");

const menus: [string, string, string][] = [
  ["ファイル", "F", "w-[88px]"], ["編集", "E", "w-[62px]"], ["表示", "V", "w-[62.500px]"], ["レイヤー", "L", "w-[88.500px]"],
  ["オブジェクト", "O", "w-[123px]"], ["パス", "P", "w-[60.500px]"], ["テキスト", "T", "w-[90px]"], ["フィルタ", "S", "w-[92px]"],
  ["エクステンション", "N", "w-[154px]"], ["ヘルプ", "H", "w-[80px]"],
];

const Light = ({ c }: { c: string }) => (
  <div className={`h-[14px] w-[14px] rounded-full border border-[#00000080] shadow-[inset_0_3px_3px_rgba(0,0,0,0.25),inset_0_-3px_4px_rgba(255,255,255,0.6)] ${c}`} />
);

export default function App() {
  return (
    <div className="h-[844px] w-[1000px] overflow-hidden bg-white pl-[18px] pt-[8px] font-['Noto_Sans','Noto_Sans_CJK_JP',sans-serif] text-[#1a1a1a]">
      <Defs />
      <div className="flex h-[808px] w-[964px] flex-col rounded-t-[5px] bg-[#f2f2f2] shadow-[0_0_1px_1px_rgba(0,0,0,0.3),0_7px_11px_rgba(0,0,0,0.6)]">
        <div className="flex h-[27px] shrink-0 items-center rounded-t-[5px] border-b border-[#a0a0a0] bg-gradient-to-b from-[#ebebeb] to-[#b5b5b5] pl-[10px] pt-[2px]">
          <div className="flex w-[351px] gap-[9px]"><Light c="bg-[#e2403c]" /><Light c="bg-[#eda73c]" /><Light c="bg-[#77be4c]" /></div>
          <div className="flex h-[16px] w-[16px] shrink-0 items-center justify-center border border-[#999] bg-white">
            <svg width="13" height="13" viewBox="0 0 13 13"><path d="M2.500 1l8 11" stroke="#333" strokeWidth="2.200" /><path d="M11 1L2 12" stroke="#333" /></svg>
          </div>
          <div className="ml-[9px] whitespace-nowrap font-['Open_Sans','Noto_Sans_CJK_JP',sans-serif] text-[14.750px] text-[#111]">新規ドキュメント<span className="tracking-[0.900px]"> 2 – Inkscape</span></div>
        </div>

        <div className="flex h-[27px] shrink-0 items-center border-b border-[#c6c6c6] pl-[9px] pt-px text-[15px]">
          {menus.map(([t, k, w]) => (
            <div key={t} className={`shrink-0 whitespace-nowrap ${w}`}>{t}(<u>{k}</u>)</div>
          ))}
        </div>

        <div className="flex h-[35px] shrink-0 items-center border-b border-[#c6c6c6]">
          <Toolbar items={bar1} />
          <svg width="14" height="10" viewBox="0 0 14 10" className="ml-[32px] mt-[2px]" fill="none"><path d="M2 2l5 5 5-5" stroke="#111" strokeWidth="1.800" /></svg>
        </div>
        <div className="h-[44px] shrink-0 border-b border-[#b5b5b5]"><Toolbar items={bar2} /></div>

        <div className="flex h-[597px] shrink-0">
          <div className="flex w-[43px] shrink-0 flex-col items-center pr-[3px] pt-[4px]">
            <Dots cls="h-[6px] w-[21px]" />
            <div className="h-[4px]" />
            {tools.map((t, i) => (
              <div key={i} className={i === 3 ? "flex h-[37.200px] w-[35px] shrink-0 items-center justify-center rounded-[4px] border border-[#8f8f8f] bg-[#cfcfcf]" : "flex h-[37.200px] w-[35px] shrink-0 items-center justify-center"}>{t}</div>
            ))}
            <svg width="10" height="14" viewBox="0 0 10 14" className="mt-[37px]" fill="none"><path d="M2 2l5 5-5 5" stroke="#111" strokeWidth="2" /></svg>
          </div>
          <div className="flex w-[385px] shrink-0 flex-col">
            <div className="pl-[15px]"><HRuler /></div>
            <div className="flex h-[555px]">
              <VRuler />
              <div className="relative w-[370px] bg-white">
                <svg width="370" height="555" className="absolute left-0 top-0"><rect x="11.500" y="112.500" width="347" height="329" fill="none" stroke="#555" strokeDasharray="5 4.330" /></svg>
              </div>
            </div>
            <div className="pl-[15px]"><HScroll offset="ml-[115px]" thumb="w-[33px]" /></div>
          </div>
          <div className="flex w-[30px] shrink-0 flex-col pl-px pt-[2px]">
            <div className="-ml-px flex h-[21px] w-[21px] items-center justify-center rounded-[4px] border border-[#8f8f8f] bg-[#f7f7f7]">
              <svg width="16" height="16" viewBox="0 0 20 20" fill="none"><path d="M13.500 13.500l5 5" stroke="#444" strokeWidth="2.600" /><circle cx="8.500" cy="8" r="6.900" fill="#f1f3f1" stroke="#777" strokeWidth="1.500" /><path d="M6 5.500v5M11 5.500v5M8.500 6v1M8.500 9v1" stroke="#666" strokeWidth="1.400" /></svg>
            </div>
            <div className="flex pt-[2px]">
              <VScroll />
              <Dots cls="ml-[3px] mt-[247px] h-[56px] w-[6px]" />
            </div>
            <svg width="14" height="14" viewBox="0 0 14 14" className="ml-[2px] mt-[3px]"><path d="M2 1c4 1 9 5 11 9-3 0-7 1-10 3z" fill="#dcdedc" stroke="#c4c4c4" /></svg>
          </div>
          <Dock />
          <SnapBar />
        </div>

        <div className="flex h-[24px] shrink-0">
          <div className="ml-px flex h-[21px] w-[948px] overflow-hidden border-y border-[#8a8a8a] bg-white">
            <svg width="20" height="19" className="shrink-0"><rect width="20" height="19" fill="#fff" /><path d="M1 0l18 19M19 0L1 19" stroke="#7a1414" strokeWidth="1.400" /></svg>
            {palette.map((c, i) => (
              <div key={i} className="w-[18.640px] shrink-0" style={{ backgroundColor: `#${c}` }} />
            ))}
          </div>
          <svg width="8" height="12" viewBox="0 0 8 12" className="ml-[3px] mt-[1px]" fill="none"><path d="M6 2L2 6l4 4" stroke="#222" strokeWidth="1.500" /></svg>
        </div>
        <div className="ml-px w-[948px] shrink-0"><HScroll offset="" thumb="w-[105px]" /></div>

        <div className="flex h-[36px] shrink-0 items-center whitespace-nowrap text-[13px]">
          <div className="flex w-[145px] shrink-0 flex-col pl-[4px] leading-[18px]">
            <div className="flex h-[18px]"><span className="w-[92px]">フィル:</span><span className="text-[12.500px]">なし</span></div>
            <div className="flex h-[18px]"><span className="w-[71px]">ストローク:</span><span className="mt-[1px] h-[17px] w-[38px] border border-[#d22] bg-[#ff2a1a]" /><span className="ml-[3px] text-[12px]">0.01</span></div>
          </div>
          <div className="w-[20px] shrink-0 pl-[2px] text-[13px]">O:</div>
          <Spin v="100" cls="h-[27px] w-[42px]" pad="pl-[3px] text-[13px]" upDim />
          <div className="ml-[4px] h-[30px] w-px bg-[#bbb]" />
          <svg width="16" height="14" viewBox="0 0 18 16" className="ml-[5px]" fill="none"><path d="M1 9c3-5 11-6 16 0-5 5-12 5-16 0z" fill="#aaa" stroke="#222" /><circle cx="9" cy="9" r="3" fill="#111" /><path d="M3 5L1.500 3M6 4L5 1M9 3.500V1M12 4l1-3M15 5.500L16.500 3" stroke="#333" /></svg>
          <svg width="12" height="15" viewBox="0 0 14 16" className="ml-[8px] mt-[3px]" fill="none"><path d="M2.500 5c0-5 8-5 8 0v3" stroke="#555" strokeWidth="1.500" /><rect x="2.500" y="7.500" width="9.500" height="7" fill="#f2e27a" stroke="#555" /><path d="M7 9v4" stroke="#333" strokeWidth="1.500" /></svg>
          <Combo cls="ml-[8px] h-[32px] w-[109px]" arrow="w-[25px]"><span className="pl-[6px] text-[13.500px] font-medium">·レイヤー 1</span></Combo>
          <div className="ml-[7px] w-[408px] shrink-0 text-[15px] tracking-[0.330px]"><b>クリック</b>または<b>領域を囲むようにドラッグ</b>してズームイ‥</div>
          <div className="h-[30px] w-px bg-[#bbb]" />
          <div className="-mt-[5px] ml-[1px] w-[21px] shrink-0 font-['DejaVu_Sans',sans-serif] text-[12px]"><div className="h-[15px] leading-[15px]">X:</div><div className="h-[15px] leading-[15px]">Y:</div></div>
          <div className="-mt-[5px] w-[51px] shrink-0 font-['DejaVu_Sans',sans-serif] text-[12px] tracking-[0.200px]"><div className="h-[15px] leading-[15px]">452.27</div><div className="h-[15px] leading-[15px]">814.94</div></div>
          <div className="-mt-[5px] w-[18px] shrink-0 text-[13px]">Z:</div>
          <div className="-mt-[5px]"><Spin v="58%" cls="h-[27px] w-[64px]" pad="pl-[9px] text-[13px]" /></div>
          <svg width="17" height="17" className="ml-[7px] mt-[19px] shrink-0"><rect width="17" height="17" fill="#fafafa" /><path d="M4 16L16 4M8 16l8-8M12 16l4-4" stroke="#999" strokeWidth="1.200" /></svg>
        </div>
      </div>
    </div>
  );
}
